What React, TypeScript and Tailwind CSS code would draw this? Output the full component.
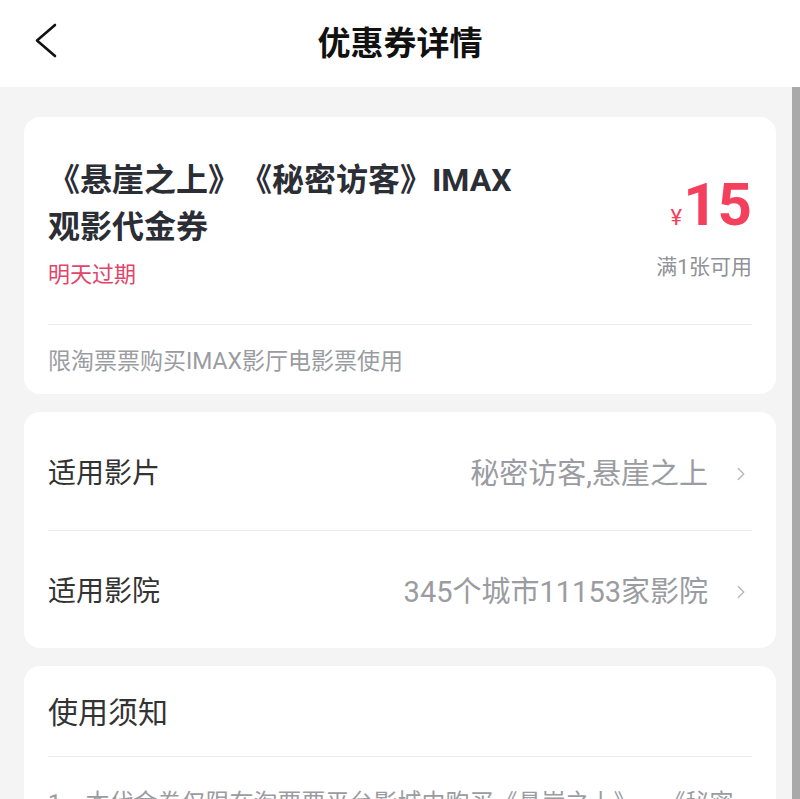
import { ChevronRight } from "lucide-react";

const font = { fontFamily: '"Roboto", "Noto Sans CJK SC", sans-serif' };

function Row({ label, value, tall }: { label: string; value: string; tall?: boolean }) {
  return (
    <div className={tall ? "flex h-[118px] items-center justify-between pt-[5px]" : "flex h-[117px] items-center justify-between pt-[5px]"}>
      <span className="text-[28px] leading-[40px] text-[#333333]">{label}</span>
      <div className="flex items-center">
        <span className="text-[29px] leading-[40px] text-[#9a9ca1]">{value}</span>
        <ChevronRight className="ml-[22px] h-[22px] w-[22px] text-[#b8b8bc]" strokeWidth={1.5} />
      </div>
    </div>
  );
}

export default function App() {
  return (
    <div style={font} className="relative h-[799px] w-full overflow-hidden bg-[#f4f4f4] [text-spacing-trim:space-all]">
      {/* header */}
      <div className="relative flex h-[87px] items-center justify-center bg-white">
        <svg
          className="absolute left-[30px] top-[22px]"
          width="32"
          height="38"
          viewBox="0 0 32 38"
          fill="none"
        >
          <path d="M25 3 L7 18.5 L25 34" stroke="#111" strokeWidth="2.6" strokeLinecap="round" strokeLinejoin="round" />
        </svg>
        <span className="text-[33px] font-bold leading-[40px] text-[#111]">优惠券详情</span>
      </div>

      <div className="flex flex-col gap-[18px] px-6 pt-[30px]">
        {/* coupon card */}
        <div className="rounded-[16px] bg-white px-6 pb-[17px] pt-[40px]">
          <div className="flex items-start justify-between">
            <div className="w-[475px]">
              <div className="text-[32px] font-bold leading-[47px] text-[#2b2e35]">
                《悬崖之上》《秘密访客》IMAX观影代金券
              </div>
              <div className="mt-[9px] text-[22px] leading-[30px] text-[#e2456a]">明天过期</div>
            </div>
            <div className="mt-[18px] flex flex-col items-end">
              <div className="flex items-baseline text-[#f4405c]">
                <span className="mr-[1px] text-[22px] leading-[30px]">¥</span>
                <span className="text-[60px] font-bold leading-[60px]">15</span>
              </div>
              <div className="mt-[17px] text-[21px] leading-[30px] text-[#8f9297]">满1张可用</div>
            </div>
          </div>
          <div className="mt-[34px] h-px bg-[#ebebeb]" />
          <div className="mt-[22px] text-[23px] leading-[30px] text-[#9a9ca1]">限淘票票购买IMAX影厅电影票使用</div>
        </div>

        {/* applicable */}
        <div className="rounded-[16px] bg-white px-6">
          <Row label="适用影片" value="秘密访客,悬崖之上" tall />
          <div className="h-px bg-[#ebebeb]" />
          <Row label="适用影院" value="345个城市11153家影院" />
        </div>

        {/* notes */}
        <div className="rounded-[16px] bg-white px-6">
          <div className="flex h-[90px] items-center pt-[4px] text-[30px] leading-[40px] text-[#333333]">使用须知</div>
          <div className="h-px bg-[#ebebeb]" />
          <div className="pt-[28px] text-[24px] leading-[36px] text-[#9a9ca1]">
            1、本代金券仅限在淘票票平台影城中购买《悬崖之上》、《秘密访客》IMAX影厅电影票时使用。
          </div>
        </div>
      </div>

      {/* scrollbar */}
      <div className="absolute bottom-0 right-0 top-[87px] w-[8px] bg-[#a9a9a9]" />
    </div>
  );
}
